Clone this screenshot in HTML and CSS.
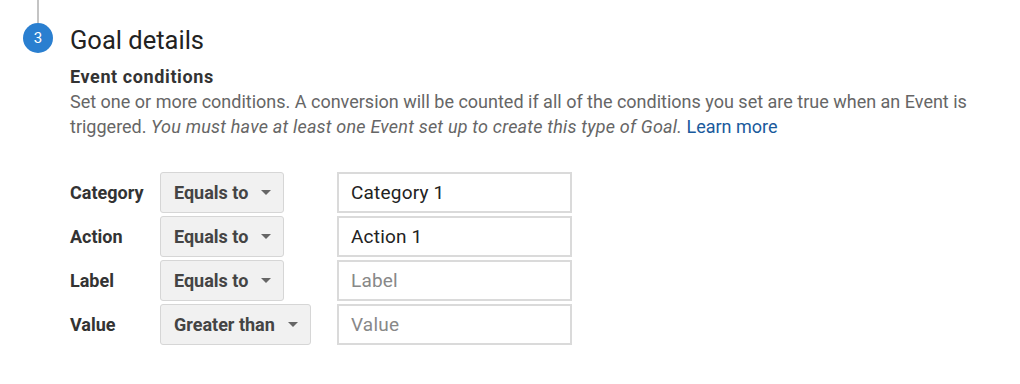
FILE: index.html
```html
<!DOCTYPE html>
<html>
<head>
<meta charset="utf-8">
<link rel="stylesheet" href="styles.css">
</head>
<body>
<div class="step">
  <div class="connector"></div>
  <div class="step-header">
    <div class="step-num">3</div>
    <h2 class="step-title">Goal details</h2>
  </div>
  <div class="step-body">
    <h3 class="section-title">Event conditions</h3>
    <p class="desc">Set one or more conditions. A conversion will be counted if all of the conditions you set are true when an Event is triggered. <em>You must have at least one Event set up to create this type of Goal.</em> <a href="#" class="link">Learn more</a></p>
    <div class="conditions">
      <div class="cond-row">
        <span class="cond-label">Category</span>
        <div class="cond-op"><button class="select">Equals to<span class="caret"></span></button></div>
        <div class="field">Category 1</div>
      </div>
      <div class="cond-row">
        <span class="cond-label">Action</span>
        <div class="cond-op"><button class="select">Equals to<span class="caret"></span></button></div>
        <div class="field">Action 1</div>
      </div>
      <div class="cond-row">
        <span class="cond-label">Label</span>
        <div class="cond-op"><button class="select">Equals to<span class="caret"></span></button></div>
        <div class="field placeholder">Label</div>
      </div>
      <div class="cond-row">
        <span class="cond-label">Value</span>
        <div class="cond-op"><button class="select">Greater than<span class="caret"></span></button></div>
        <div class="field placeholder">Value</div>
      </div>
    </div>
  </div>
</div>
</body>
</html>
```

FILE: styles.css
```css
html, body {
  margin: 0;
  padding: 0;
  background: #fff;
}
body {
  font-family: Roboto, "Liberation Sans", Arial, sans-serif;
  color: #333;
  width: 1020px;
  height: 384px;
  overflow: hidden;
}
.connector {
  width: 2px;
  height: 23px;
  margin-left: 37px;
  background: #c4c4c4;
}
.step-header {
  display: flex;
  align-items: center;
  height: 30px;
}
.step-num {
  width: 30px;
  height: 30px;
  margin-left: 23px;
  border-radius: 50%;
  background: #2a7fd0;
  color: #fff;
  font-size: 15px;
  display: flex;
  align-items: center;
  justify-content: center;
}
.step-title {
  margin: 0 0 0 17px;
  font-size: 25.5px;
  font-weight: 400;
  color: #222;
  line-height: 30px;
  position: relative;
  top: 2px;
}
.step-body {
  padding-left: 70px;
  padding-right: 40px;
}
.section-title {
  margin: 12px 0 0;
  font-size: 18px;
  font-weight: 700;
  letter-spacing: 0.6px;
  color: #333;
  line-height: 24px;
}
.desc {
  margin: 0;
  font-size: 18px;
  line-height: 25px;
  color: #666;
}
.desc em {
  font-style: italic;
  letter-spacing: 0.2px;
}
.link {
  color: #1a5a9c;
  text-decoration: none;
}
.conditions {
  margin-top: 33px;
  display: flex;
  flex-direction: column;
  gap: 3px;
}
.cond-row {
  display: flex;
  align-items: center;
  height: 41px;
}
.cond-label {
  width: 90px;
  font-size: 18px;
  font-weight: 700;
  color: #333;
}
.cond-op {
  width: 177px;
}
.select {
  display: inline-flex;
  align-items: center;
  height: 41px;
  padding: 0 12px 0 13px;
  border: 1px solid #d6d6d6;
  border-radius: 3px;
  background: #f1f1f1;
  font-family: Roboto, "Liberation Sans", Arial, sans-serif;
  font-size: 18px;
  font-weight: 700;
  color: #444;
  box-sizing: border-box;
}
.caret {
  display: inline-block;
  width: 0;
  height: 0;
  margin-left: 13px;
  border-left: 5px solid transparent;
  border-right: 5px solid transparent;
  border-top: 5px solid #666;
}
.field {
  width: 235px;
  height: 41px;
  box-sizing: border-box;
  border: 2px solid #dadada;
  padding: 0 12px;
  display: flex;
  align-items: center;
  font-size: 19px;
  letter-spacing: 0.2px;
  color: #222;
}
.field.placeholder {
  color: #888;
}
```
